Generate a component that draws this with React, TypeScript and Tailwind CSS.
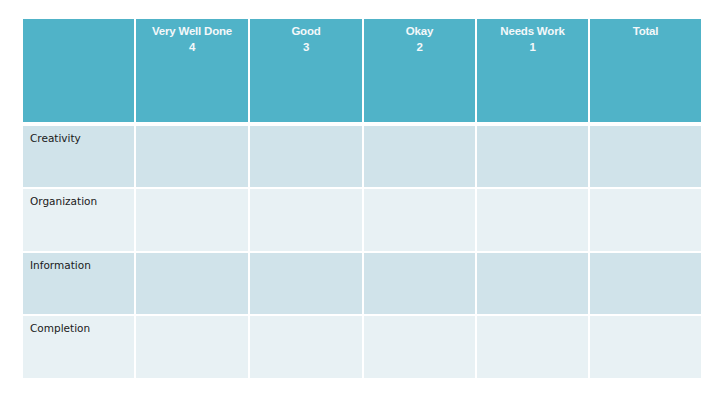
const COLS = [
  { title: "Very Well Done", score: "4" },
  { title: "Good", score: "3" },
  { title: "Okay", score: "2" },
  { title: "Needs Work", score: "1" },
  { title: "Total", score: "" },
];

const ROWS = [
  { label: "Creativity", h: "h-[61px]", bg: "bg-[#d0e3ea]" },
  { label: "Organization", h: "h-[62px]", bg: "bg-[#e8f1f4]" },
  { label: "Information", h: "h-[61px]", bg: "bg-[#d0e3ea]" },
  { label: "Completion", h: "h-[62px]", bg: "bg-[#e8f1f4]" },
];

const grid = "grid grid-cols-[111px_112px_112px_111px_111px_111px] gap-x-[2px]";

export default function App() {
  return (
    <div className="w-[720px] h-[405px] bg-white pl-[23px] pt-[19px]">
      {/* header */}
      <div className={`${grid} h-[103px]`}>
        <div className="bg-[#50b3c8]" />
        {COLS.map((c) => (
          <div
            key={c.title}
            className="bg-[#50b3c8] pt-[4px] text-center text-[11.5px] leading-[16px] font-bold text-[#f4f8fa] [font-family:'Liberation_Sans',sans-serif] tracking-[-0.2px]"
          >
            <div>{c.title}</div>
            {c.score && <div>{c.score}</div>}
          </div>
        ))}
      </div>

      {/* body */}
      <div className="mt-[4px] flex flex-col gap-y-[2px]">
        {ROWS.map((r) => (
          <div key={r.label} className={`${grid} ${r.h}`}>
            <div className={`${r.bg} pl-[7px] pt-[5px] text-[10.5px] leading-[14px] text-[#1a1a1a] [font-family:'DejaVu_Sans',sans-serif]`}>
              {r.label}
            </div>
            {COLS.map((c) => (
              <div key={c.title} className={r.bg} />
            ))}
          </div>
        ))}
      </div>
    </div>
  );
}
